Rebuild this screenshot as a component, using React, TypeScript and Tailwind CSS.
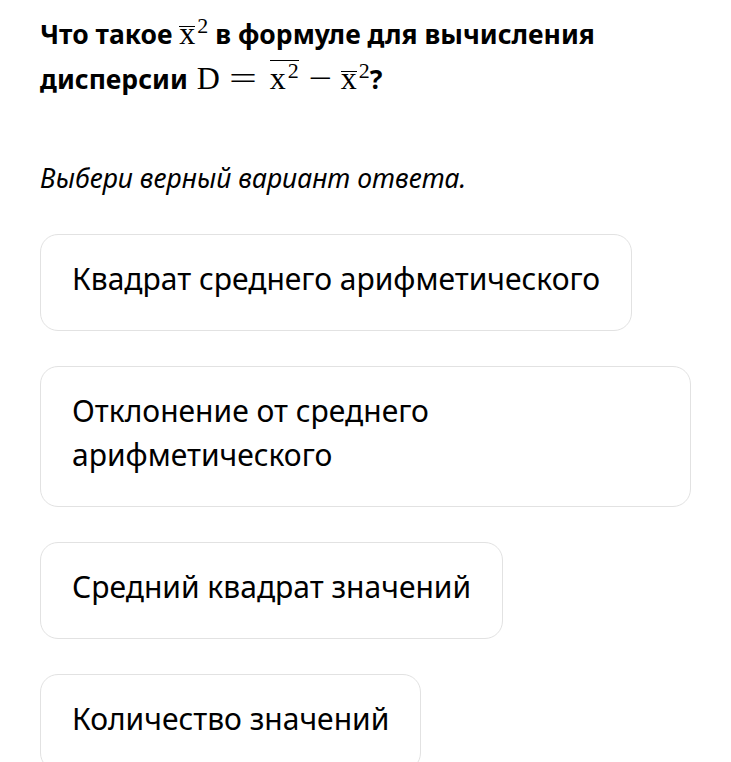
import React from "react";

function XBar() {
  return (
    <span className="inline-block font-[family-name:'Liberation_Serif',serif] font-normal text-[32px] leading-[12px] border-t-[1.5px] border-black">
      x
    </span>
  );
}

function Sup() {
  return (
    <span className="font-[family-name:'Liberation_Serif',serif] font-normal text-[22px] leading-[14px] align-[11px] ml-[2px]">
      2
    </span>
  );
}

export default function App() {
  const options = [
    "Квадрат среднего арифметического",
    "Отклонение от среднего арифметического",
    "Средний квадрат значений",
    "Количество значений",
  ];
  return (
    <div className="bg-white min-h-[762px] px-10 pt-[12px] text-black font-['Noto_Sans',sans-serif]">
      <h1 className="text-[26.5px] font-bold leading-[45px] max-w-[651px]">
        Что такое <XBar />
        <Sup /> в формуле для вычисления дисперсии{" "}
        <span className="font-[family-name:'Liberation_Serif',serif] font-normal text-[32px] leading-[14px] ml-[2px]">
          D
        </span>
        <span className="inline-block text-center w-[26px] mx-[10px] scale-x-[1.55] font-[family-name:'Liberation_Serif',serif] font-normal text-[32px] leading-[14px]">
          =
        </span>
        <span className="inline-block font-[family-name:'Liberation_Serif',serif] font-normal text-[32px] leading-[14px] border-t-[1.5px] border-black pt-[3px] ml-[4px]">
          x
          <span className="text-[22px] leading-[14px] align-[11px] ml-[2px]">2</span>
        </span>
        <span className="inline-block text-center w-[20px] mx-[11px] scale-x-[1.3] font-[family-name:'Liberation_Serif',serif] font-normal text-[32px] leading-[14px]">
          −
        </span>
        <XBar />
        <Sup />?
      </h1>
      <p className="italic text-[26.5px] mt-[60px] leading-[32px]">Выбери верный вариант ответа.</p>
      <div className="flex flex-col items-start gap-[35px] mt-[40px]">
        {options.map((o) => (
          <div
            key={o}
            className="max-w-[652px] border border-[#e2e2e2] rounded-[18px] px-[31px] pt-[22px] pb-[29px] text-[30px] leading-[44px]"
          >
            {o}
          </div>
        ))}
      </div>
    </div>
  );
}
